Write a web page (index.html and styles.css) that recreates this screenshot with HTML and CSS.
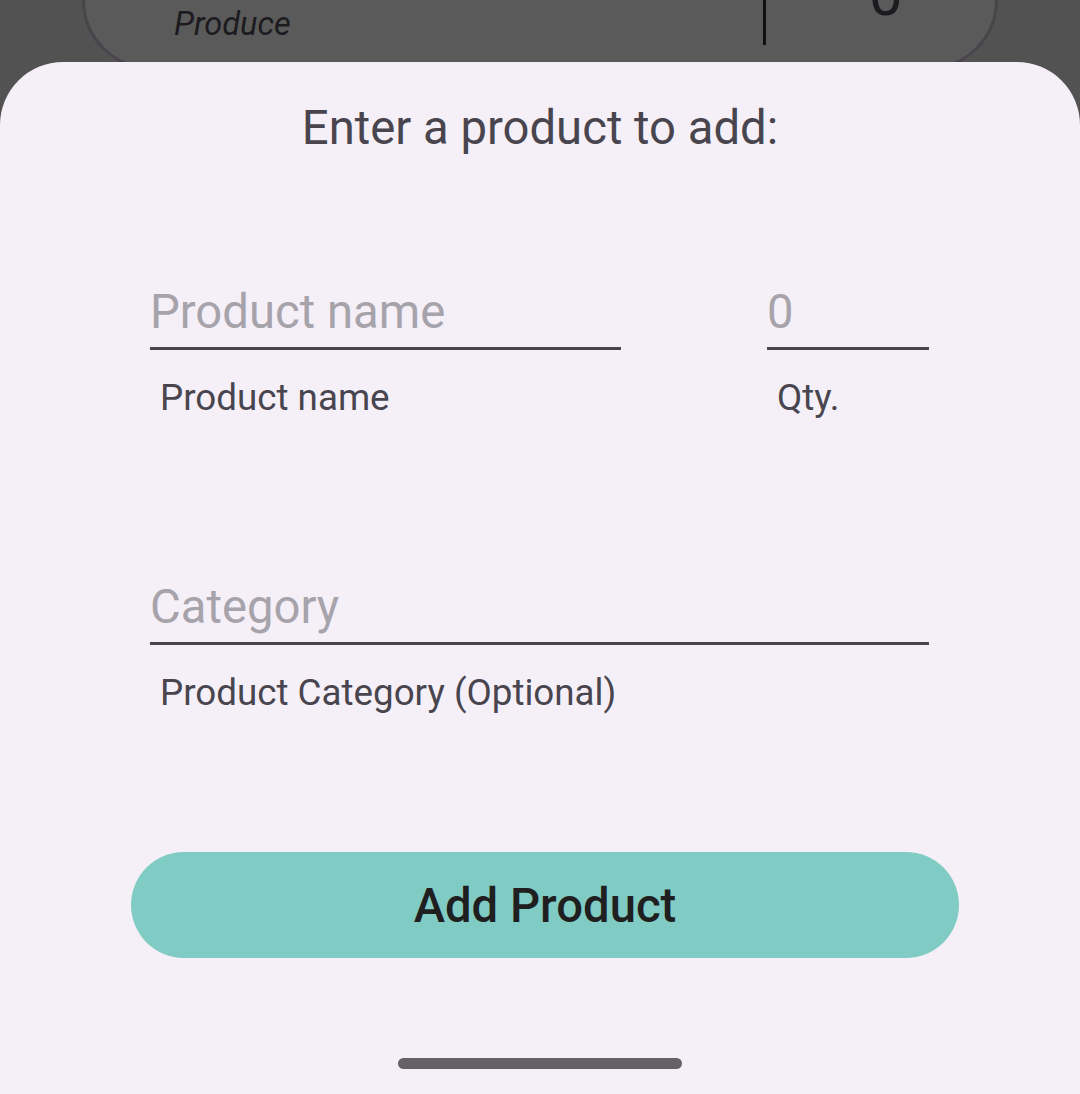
FILE: index.html
```html
<!DOCTYPE html>
<html>
<head>
<meta charset="utf-8">
<link rel="stylesheet" href="styles.css">
</head>
<body>
<div class="backdrop">
  <div class="strip">
    <div class="card">
      <span class="card-cat">Produce</span>
      <span class="card-div"></span>
      <span class="card-qty">0</span>
    </div>
  </div>
</div>
<div class="sheet">
  <h1 class="title">Enter a product to add:</h1>
  <div class="form">
    <div class="row">
      <div class="field name">
        <input class="input" type="text" placeholder="Product name">
        <div class="label">Product name</div>
      </div>
      <div class="field qty">
        <input class="input" type="text" placeholder="0">
        <div class="label">Qty.</div>
      </div>
    </div>
    <div class="row second">
      <div class="field cat">
        <input class="input" type="text" placeholder="Category">
        <div class="label">Product Category (Optional)</div>
      </div>
    </div>
  </div>
  <button class="add-btn">Add Product</button>
  <div class="home-bar"></div>
</div>
</body>
</html>
```

FILE: styles.css
```css
html, body {
  margin: 0;
  padding: 0;
}
body {
  width: 1080px;
  height: 1094px;
  overflow: hidden;
  background: #525252;
  font-family: Roboto, "Noto Sans", sans-serif;
}
.backdrop {
  height: 62px;
  overflow: hidden;
  padding: 0 63px;
}
.strip {
  height: 100%;
  background: #404c42;
  padding: 0 19px;
}
.card {
  margin-top: -70px;
  height: 134px;
  border: 3px solid #48454b;
  border-radius: 80px;
  background: #5a5a5a;
  position: relative;
}
.card-cat {
  position: absolute;
  left: 89px;
  top: 75px;
  font-style: italic;
  font-size: 32.5px;
  line-height: 1;
  color: #1d1b20;
}
.card-div {
  position: absolute;
  left: 678px;
  top: 0;
  width: 3px;
  height: 112px;
  background: #111;
}
.card-qty {
  position: absolute;
  left: 784px;
  top: 32px;
  font-size: 60px;
  line-height: 1;
  color: #1d1b20;
}
.sheet {
  height: 1032px;
  background: #f5f0f8;
  border-radius: 63px 63px 0 0;
  display: flex;
  flex-direction: column;
  padding-top: 43px;
  box-sizing: border-box;
}
.title {
  margin: 0;
  font-weight: 400;
  font-size: 47.25px;
  line-height: 1;
  text-align: center;
  color: #48454e;
}
.form {
  margin-top: 136px;
  padding: 0 151px 0 150px;
  display: flex;
  flex-direction: column;
}
.row {
  display: flex;
  justify-content: space-between;
}
.row.second {
  margin-top: 166px;
}
.field {
  display: flex;
  flex-direction: column;
}
.field.name { width: 471px; }
.field.qty { width: 162px; }
.field.cat { width: 779px; }
.input {
  display: block;
  width: 100%;
  box-sizing: border-box;
  height: 62px;
  margin: 0;
  padding: 0 0 11px 0;
  border: none;
  border-bottom: 3px solid #49454f;
  background: transparent;
  outline: none;
  font-family: Roboto, "Noto Sans", sans-serif;
  font-size: 47.25px;
  line-height: 48px;
  color: #1d1b20;
}
.input::placeholder {
  color: #a7a3ab;
}
.label {
  margin-top: 30px;
  padding-left: 10px;
  font-size: 36.75px;
  line-height: 1;
  color: #49454f;
}
.add-btn {
  margin: 140px 0 0 131px;
  width: 828px;
  height: 106px;
  border: none;
  border-radius: 53px;
  background: #80cbc4;
  font-family: Roboto, "Noto Sans", sans-serif;
  font-weight: 500;
  font-size: 47.25px;
  line-height: 1;
  color: #1f1f1f;
  padding: 4px 0 0 0;
}
.home-bar {
  margin: 100px auto 0;
  width: 284px;
  height: 11px;
  border-radius: 6px;
  background: #656166;
}
```
